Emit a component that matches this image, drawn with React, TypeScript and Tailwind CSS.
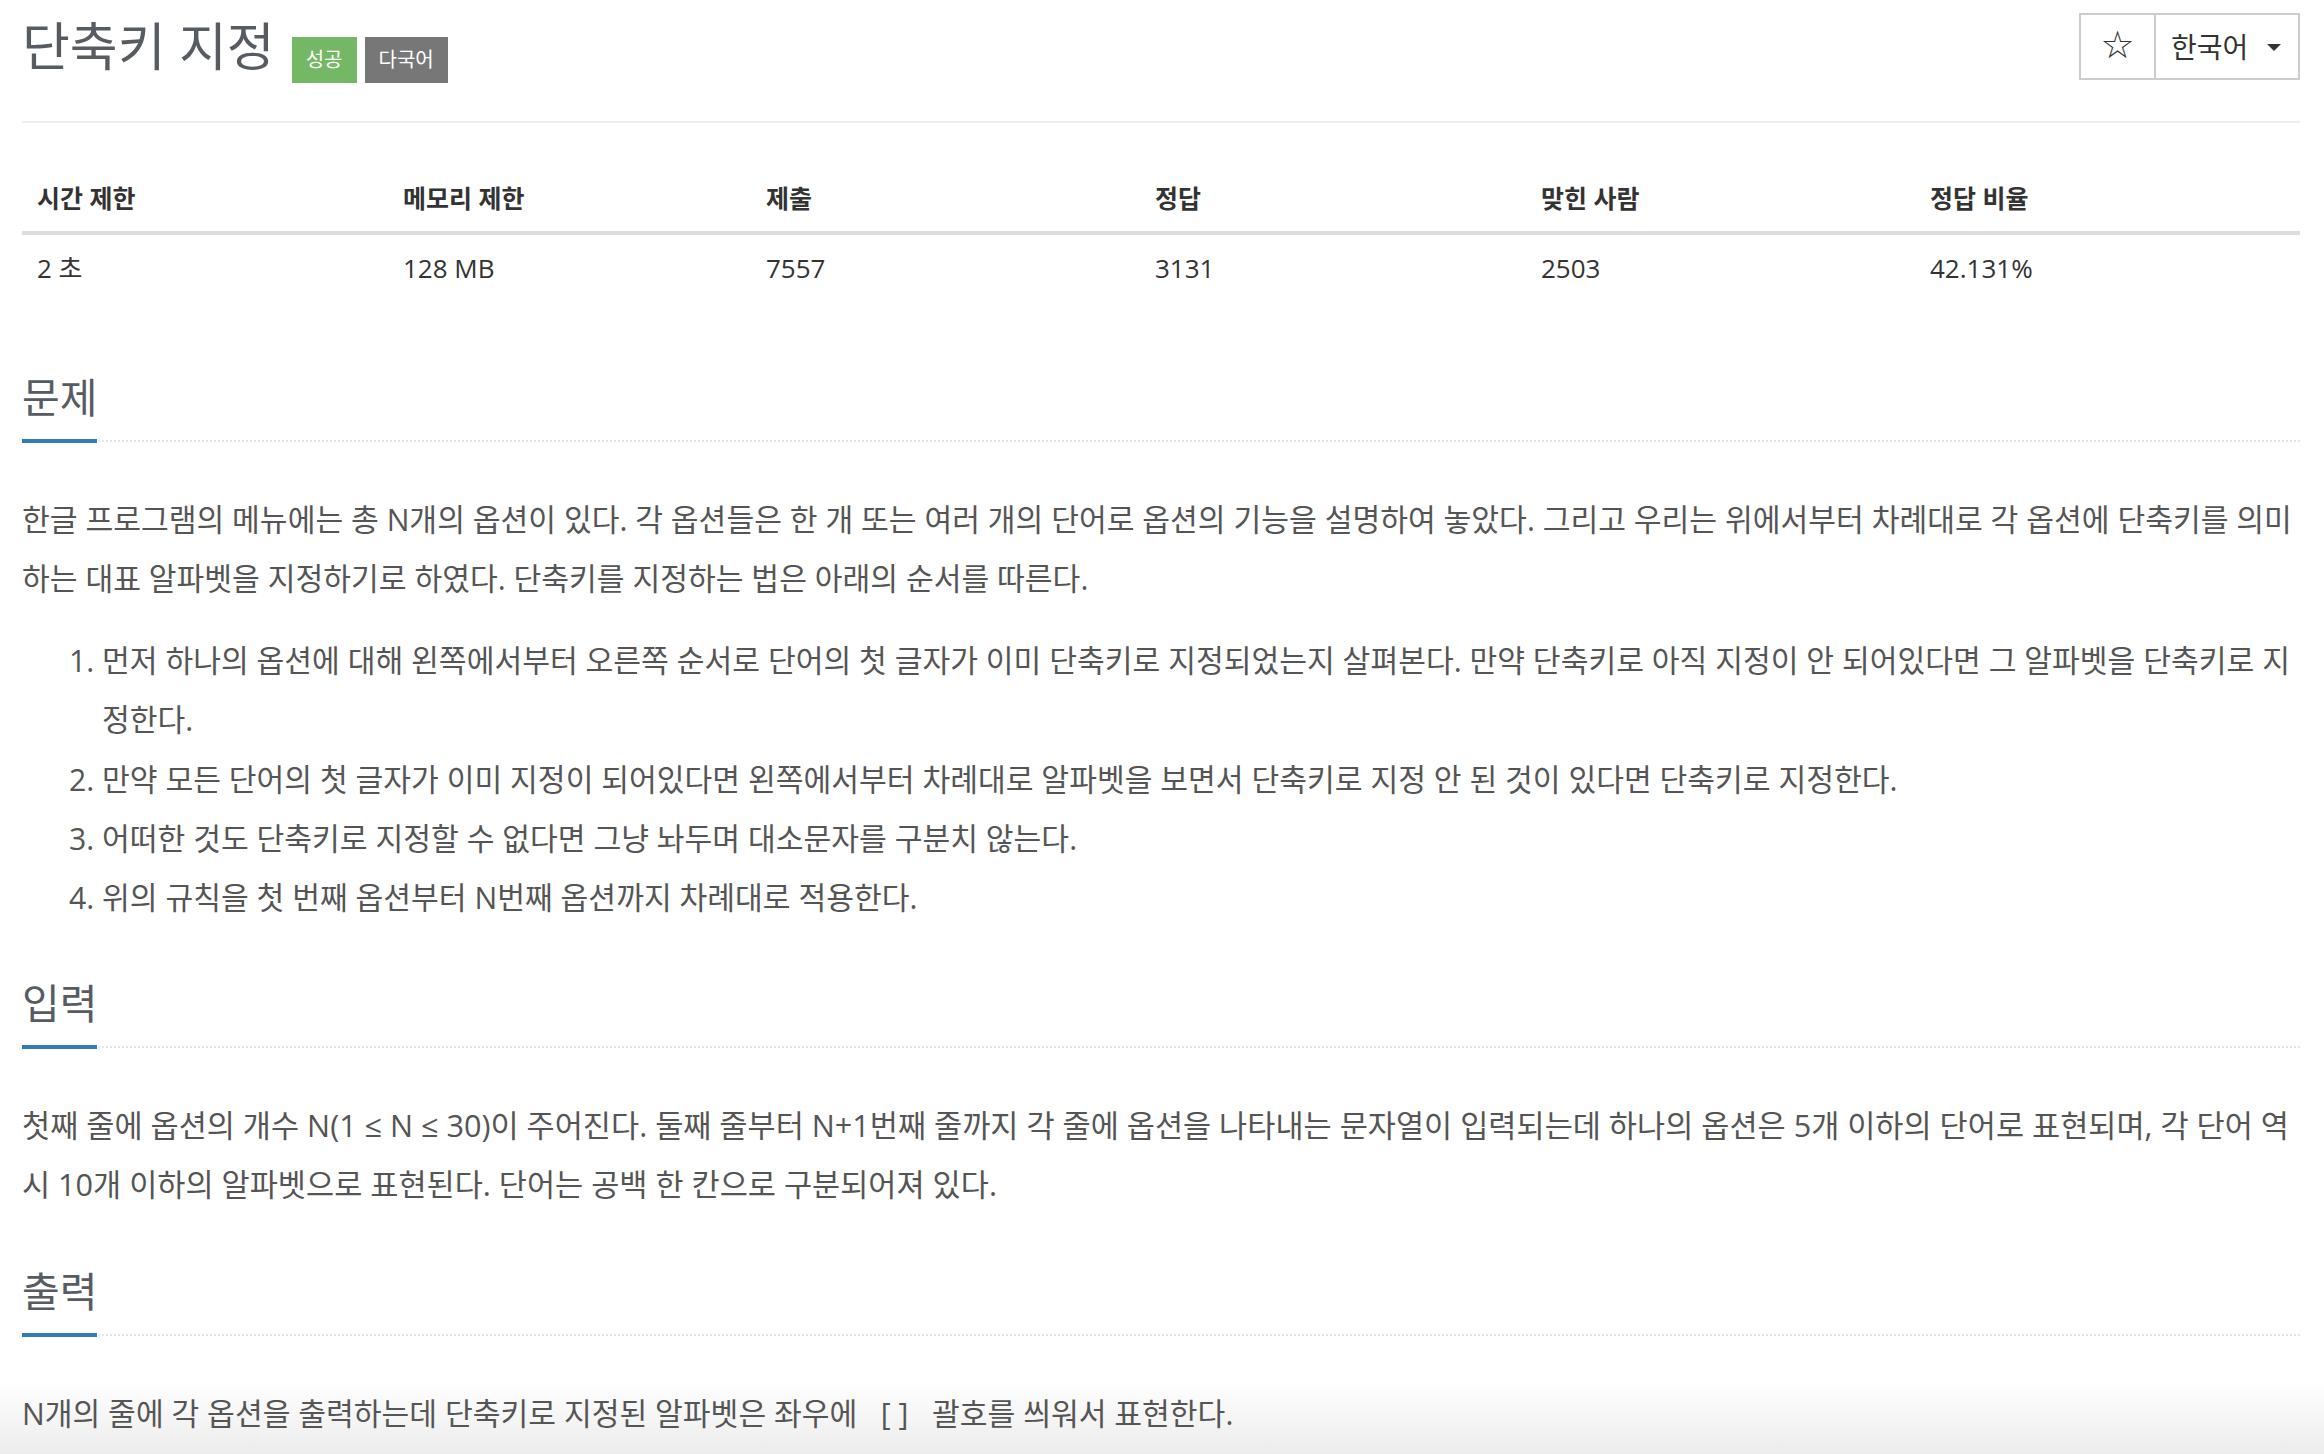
import React from 'react';

const stats = [
  { label: '시간 제한', value: '2 초', w: 'w-[366px]' },
  { label: '메모리 제한', value: '128 MB', w: 'w-[363px]' },
  { label: '제출', value: '7557', w: 'w-[389px]' },
  { label: '정답', value: '3131', w: 'w-[386px]' },
  { label: '맞힌 사람', value: '2503', w: 'w-[389px]' },
  { label: '정답 비율', value: '42.131%', w: 'w-[385px]' },
];

const rules = [
  '먼저 하나의 옵션에 대해 왼쪽에서부터 오른쪽 순서로 단어의 첫 글자가 이미 단축키로 지정되었는지 살펴본다. 만약 단축키로 아직 지정이 안 되어있다면 그 알파벳을 단축키로 지정한다.',
  '만약 모든 단어의 첫 글자가 이미 지정이 되어있다면 왼쪽에서부터 차례대로 알파벳을 보면서 단축키로 지정 안 된 것이 있다면 단축키로 지정한다.',
  '어떠한 것도 단축키로 지정할 수 없다면 그냥 놔두며 대소문자를 구분치 않는다.',
  '위의 규칙을 첫 번째 옵션부터 N번째 옵션까지 차례대로 적용한다.',
];

function Headline({ title, className }: { title: string; className?: string }) {
  return (
    <div className={`flex items-end border-b-2 border-dotted border-[#e3e3ec] ${className ?? ''}`}>
      <h2 className="-mb-[3px] border-b-4 border-[#337ab7] pb-[18px] text-[41px] leading-[48px] font-normal text-[#575c63]">
        {title}
      </h2>
    </div>
  );
}

export default function App() {
  return (
    <div className="h-[1454px] overflow-hidden bg-[linear-gradient(to_bottom,#ffffff_1380px,#ececec_1454px)] font-['Open_Sans','Noto_Sans_CJK_KR',sans-serif] text-[#555]">
      <div className="pl-[22px] pr-[24px]">
        {/* header */}
        <div className="flex h-[123px] items-start justify-between border-b-2 border-[#eee]">
          <div className="flex items-start">
            <h1 className="mt-[20px] text-[52px] leading-[52px] font-normal text-[#575c63]">단축키 지정</h1>
            <div className="mt-[37px] ml-[17px] flex gap-[8px]">
              <span className="flex h-[46px] items-center bg-[#74b866] px-[14px] text-[20px] text-white">성공</span>
              <span className="flex h-[46px] items-center bg-[#777] px-[14px] text-[20px] text-white">다국어</span>
            </div>
          </div>
          <div className="mt-[13px] flex h-[67px] text-[#333]">
            <button className="flex w-[77px] items-center justify-center border-2 border-[#ccc] bg-white pb-[3px] text-[38px] font-['DejaVu_Sans',sans-serif]">
              ☆
            </button>
            <button className="flex w-[144px] items-center justify-between border-2 border-l-0 border-[#ccc] bg-white pl-[15px] pr-[17px] text-[28px]">
              <span>한국어</span>
              <span className="mt-[2px] h-0 w-0 border-x-[7px] border-t-[7px] border-x-transparent border-t-[#333]" />
            </button>
          </div>
        </div>

        {/* limits */}
        <table className="mt-[42px] w-full table-fixed border-collapse text-[#333]">
          <thead>
            <tr>
              {stats.map((s) => (
                <th key={s.label} className={`${s.w} border-b-4 border-[#ddd] px-[15px] py-[16px] text-left text-[25px] leading-[34px] font-bold`}>
                  {s.label}
                </th>
              ))}
            </tr>
          </thead>
          <tbody>
            <tr>
              {stats.map((s) => (
                <td key={s.label} className="px-[15px] py-[16px] text-[26px] leading-[34px]">
                  {s.value}
                </td>
              ))}
            </tr>
          </tbody>
        </table>

        {/* 문제 */}
        <Headline title="문제" className="mt-[72px]" />
        <div className="mt-[48px] text-[30.2px] leading-[59.4px]">
          <p>
            한글 프로그램의 메뉴에는 총 N개의 옵션이 있다. 각 옵션들은 한 개 또는 여러 개의 단어로 옵션의 기능을 설명하여 놓았다. 그리고 우리는 위에서부터 차례대로 각 옵션에 단축키를 의미하는 대표 알파벳을 지정하기로 하였다. 단축키를 지정하는 법은 아래의 순서를 따른다.
          </p>
          <ol className="mt-[22px] list-decimal pl-[80px]">
            {rules.map((r) => (
              <li key={r}>{r}</li>
            ))}
          </ol>
        </div>

        {/* 입력 */}
        <Headline title="입력" className="mt-[51px]" />
        <p className="mt-[48px] text-[30.6px] leading-[59.4px]">
          첫째 줄에 옵션의 개수 N(1 ≤ N ≤ 30)이 주어진다. 둘째 줄부터 N+1번째 줄까지 각 줄에 옵션을 나타내는 문자열이 입력되는데 하나의 옵션은 5개 이하의 단어로 표현되며, 각 단어 역시 10개 이하의 알파벳으로 표현된다. 단어는 공백 한 칸으로 구분되어져 있다.
        </p>

        {/* 출력 */}
        <Headline title="출력" className="mt-[52px]" />
        <p className="mt-[48px] text-[30.2px] leading-[59.4px]">
          N개의 줄에 각 옵션을 출력하는데 단축키로 지정된 알파벳은 좌우에 &nbsp;&nbsp;[ ]&nbsp;&nbsp; 괄호를 씌워서 표현한다.
        </p>
      </div>
    </div>
  );
}
